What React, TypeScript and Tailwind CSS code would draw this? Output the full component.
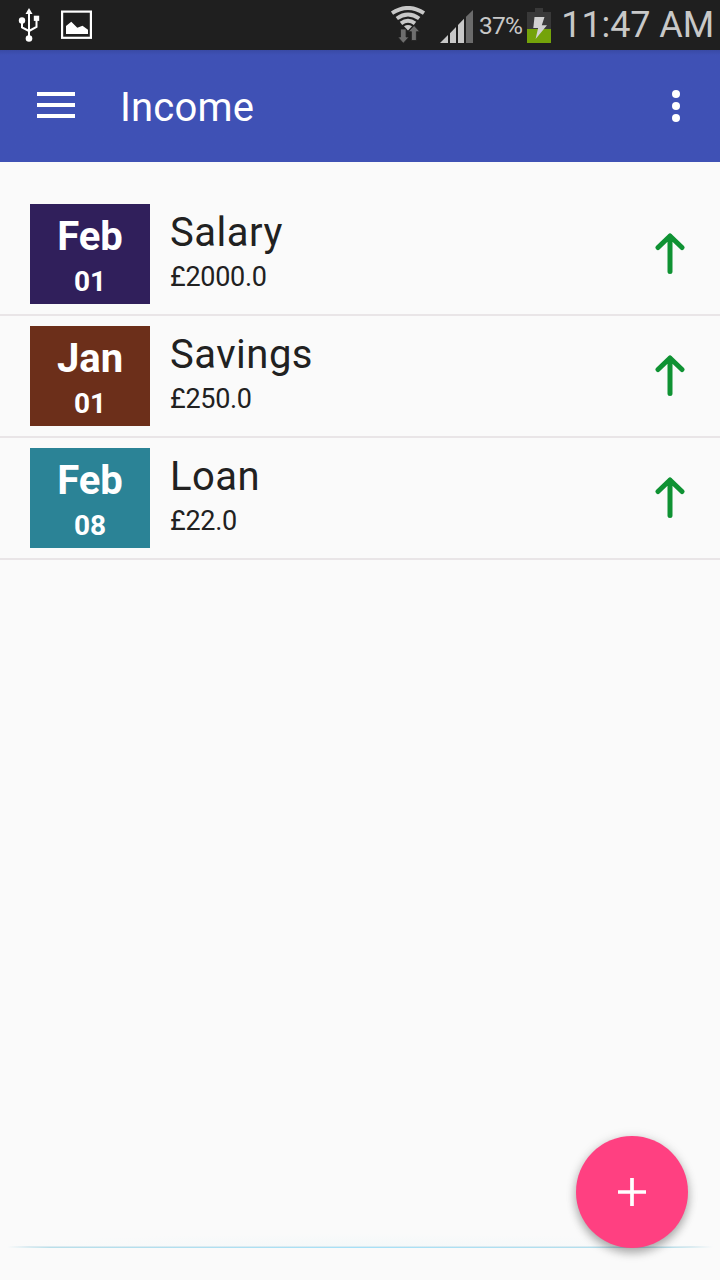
type Entry = {
  month: string;
  day: string;
  name: string;
  amount: string;
  color: string;
};

const entries: Entry[] = [
  { month: "Feb", day: "01", name: "Salary", amount: "£2000.0", color: "bg-[#301f5b]" },
  { month: "Jan", day: "01", name: "Savings", amount: "£250.0", color: "bg-[#6c2f1a]" },
  { month: "Feb", day: "08", name: "Loan", amount: "£22.0", color: "bg-[#2b8396]" },
];

function UsbIcon() {
  return (
    <svg className="h-[36px] w-[22px]" viewBox="0 0 22 36" fill="none" stroke="#fff" strokeWidth="2">
      <path d="M11 5v26M4 13v7.5l7 3.5M18.5 11v9l-7.5 4" />
      <path d="M11 1l3.5 6h-7z" fill="#fff" stroke="none" />
      <circle cx="4" cy="13.5" r="3.2" fill="#fff" stroke="none" />
      <rect x="15.8" y="8.7" width="5.4" height="5.2" fill="#fff" stroke="none" />
      <circle cx="11" cy="31.5" r="3.3" fill="#fff" stroke="none" />
    </svg>
  );
}

function PictureIcon() {
  return (
    <svg className="h-[29px] w-[31px]" viewBox="0 0 31 29">
      <rect x="1.1" y="1.6" width="28.8" height="26.2" fill="none" stroke="#fff" strokeWidth="2.2" />
      <path d="M5 24v-8l5.3-4.2 6 6 5.2-2.1 5.5 4V24z" fill="#fff" />
    </svg>
  );
}

function WifiIcon() {
  return (
    <svg className="h-[38px] w-[36px]" viewBox="0 0 36 38">
      <g fill="none" stroke="#c8c8c8" strokeWidth="3.9">
        <path d="M2 7.2Q18 -3.4 34 7.2" />
        <path d="M6.8 12.5Q18 4.4 29.2 12.5" />
        <path d="M11 17.4Q18 12 25 17.4" />
      </g>
      <path d="M14 20.2q4-2.6 8 0L18 24.6z" fill="#c8c8c8" />
      <path
        d="M10.5 23h5.6v8h3l-5.8 6.3L7.8 31h2.7zM21.4 34.5h5V25.7h3.4L24.1 19.5 18.3 25.7h3.1z"
        fill="#6e6e6e"
        stroke="#1f1f1f"
        strokeWidth=".8"
      />
    </svg>
  );
}

function SignalIcon() {
  return (
    <svg className="h-[33px] w-[33px]" viewBox="0 0 33 33" fill="#c8c8c8">
      <path d="M0 33L8 25V33zM10 23.2L16 17V33H10zM18 15L24 8.8V33H18z" />
      <path d="M26 6.8L33 0V33H26z" fill="#6b6b6b" />
    </svg>
  );
}

function BatteryIcon() {
  return (
    <svg className="h-[35px] w-[24px]" viewBox="0 0 24 35">
      <path d="M8 0h8v4h8v17H0V4h8z" fill="#393939" />
      <path d="M0 21h24v14H0z" fill="#74a30a" />
      <path d="M7.5 9h10l-2.7 8.2H20L8.6 31l2.5-11H6.3z" fill="#d2d2d2" />
    </svg>
  );
}

function StatusBar() {
  return (
    <header className="flex h-[50px] shrink-0 items-start justify-between bg-[#1f1f1f] text-[#c8c8c8]">
      <div className="flex pl-[18px]">
        <div className="pt-[7px]">
          <UsbIcon />
        </div>
        <div className="pt-2.5 pl-[21px]">
          <PictureIcon />
        </div>
      </div>
      <div className="flex items-start pt-[6px] pr-[6px]">
        <WifiIcon />
        <div className="ml-[14px] pt-1">
          <SignalIcon />
        </div>
        <span className="ml-1.5 w-[48px] pt-1 text-[24.5px] leading-8 tracking-[-0.8px] whitespace-nowrap">37%</span>
        <div className="pt-0.5">
          <BatteryIcon />
        </div>
        <span className="ml-2.5 w-[153px] pt-px text-right text-[36px] leading-9 tracking-[-0.1px] whitespace-nowrap">
          11:47 AM
        </span>
      </div>
    </header>
  );
}

function AppBar() {
  return (
    <nav className="flex h-28 shrink-0 items-center bg-[#3f51b5] bg-linear-to-b from-[#394aa5] to-[#3f51b5] to-[5px] text-white">
      <button className="ml-[37px] flex w-[38px] flex-col gap-[7px] pb-0.5" aria-label="Menu">
        <span className="h-1 w-full bg-white" />
        <span className="h-1 w-full bg-white" />
        <span className="h-1 w-full bg-white" />
      </button>
      <h1 className="ml-[45px] pt-1 text-[40px] leading-[48px] tracking-[0.2px]">Income</h1>
      <button className="mr-10 ml-auto flex flex-col gap-1" aria-label="More options">
        <span className="size-2 rounded-full bg-white" />
        <span className="size-2 rounded-full bg-white" />
        <span className="size-2 rounded-full bg-white" />
      </button>
    </nav>
  );
}

function EntryRow({ entry }: { entry: Entry }) {
  return (
    <li className="flex h-[122px] items-start border-b-2 border-[#e9e5e7] pt-2.5 pr-[35px] pl-[30px]">
      <div className={`flex h-[100px] w-[120px] flex-col items-center pt-[9px] font-bold text-white ${entry.color}`}>
        <span className="text-[40px] leading-[48px]">{entry.month}</span>
        <span className="text-[28px] leading-[42px]">{entry.day}</span>
      </div>
      <div className="flex flex-1 flex-col pt-[5px] pl-5 text-[#212121]">
        <span className="text-[40px] leading-[48px] tracking-[0.5px]">{entry.name}</span>
        <span className="text-[27px] leading-10 tracking-[-0.3px]">{entry.amount}</span>
      </div>
      <svg
        className="mt-7 h-[44px] w-[30px]"
        viewBox="0 0 30 44"
        fill="none"
        stroke="#0f9233"
        strokeWidth="5"
        strokeLinecap="round"
      >
        <path d="M15 4v35.5M3 15.5L15 4l12 11.5" strokeLinejoin="round" />
      </svg>
    </li>
  );
}

export default function App() {
  return (
    <div className="relative flex h-[1280px] w-[720px] flex-col overflow-hidden bg-[#fafafa] font-['Roboto',sans-serif]">
      <StatusBar />
      <AppBar />
      <ul className="flex-1 pt-8">
        {entries.map((entry) => (
          <EntryRow key={entry.name} entry={entry} />
        ))}
      </ul>
      <div className="mb-8 flex shrink-0 flex-col">
        <div className="h-3 bg-[radial-gradient(ellipse_50%_100%_at_50%_100%,#f4f8f9,#fafafa)]" />
        <div className="h-px bg-[linear-gradient(to_right,#fafafa_1%,#dbeaf0_4%,#d8ebf2_50%,#dbeaf0_96%,#fafafa_99%)]" />
        <div className="h-px bg-[linear-gradient(to_right,#fafafa_1%,#b9dfea_7%,#a6e0f8_50%,#b9dfea_93%,#fafafa_99%)]" />
      </div>
      <button
        className="absolute right-8 bottom-8 flex size-28 items-center justify-center rounded-full bg-[#ff4081] shadow-[0_5px_10px_rgba(0,0,0,0.28),0_1px_12px_rgba(0,0,0,0.12)]"
        aria-label="Add income"
      >
        <svg className="size-7" viewBox="0 0 28 28" stroke="#fff" strokeWidth="3.7">
          <path d="M14 0v28M0 14h28" />
        </svg>
      </button>
    </div>
  );
}
